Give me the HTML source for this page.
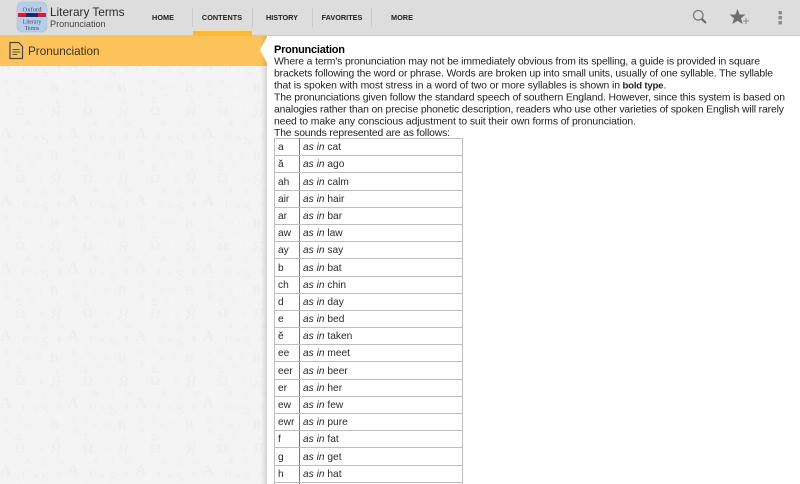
<!DOCTYPE html>
<html><head><meta charset="utf-8"><style>
html,body{margin:0;padding:0;width:800px;height:484px;overflow:hidden;background:#fff;font-family:"Liberation Sans",sans-serif;color:#111}
#root{position:absolute;left:0;top:0;width:800px;height:484px;overflow:hidden;background:#fff}
#root>div,#root>svg{position:absolute}
#hdr{left:0;top:0;width:800px;height:35px;background:#dddddd;border-bottom:1px solid #c9c9c9}
.tab{position:absolute;top:13px;font-size:7.3px;font-weight:bold;color:#222;line-height:10px;text-align:center;width:60px}
.sep{position:absolute;top:8px;width:1px;height:19px;background:#cbcbcb}
#side{left:0;top:36px;width:267px;height:448px;background:#f4f4f4}
#bar{left:0;top:36px;width:267px;height:30px;background:#fdc35b}
table{position:absolute;left:274px;top:138px;border-collapse:collapse;width:189px;table-layout:fixed;font-size:10.2px;color:#2a2a2a}
td{border:1px solid #bdbdbd;padding:2.2px 0 0 3px;height:14px;line-height:14px;white-space:nowrap;overflow:hidden}
td:first-child{width:21px;border-right-color:#777}
</style></head><body><div id="root">
<div id="side"></div>
<svg width="267" height="448" style="left:0;top:36px">
<defs>
<pattern id="p" width="67.5" height="67.5" patternUnits="userSpaceOnUse" patternTransform="translate(0,30)">
<g font-family="Liberation Serif" fill="#eeeeee">
<text x="0" y="72" font-size="16" font-weight="bold">A</text><text x="0" y="4.5" font-size="16" font-weight="bold">A</text>
<text x="22" y="6.5" font-size="15">∂</text>
<text x="41" y="11" font-size="15">S</text>
<text x="57" y="6" font-size="8" font-weight="bold">ß</text>
<text x="33" y="6" font-size="7" font-weight="bold">ъ</text>
<text x="4" y="18" font-size="9">ŋ</text>
<text x="17" y="18" font-size="9">ü</text>
<text x="25" y="24" font-size="7">m</text>
<text x="36" y="24" font-size="8">O</text>
<text x="50" y="26" font-size="13" font-weight="bold">B</text>
<text x="5" y="31" font-size="9">K</text>
<text x="16" y="37" font-size="9" font-weight="bold">Σ</text>
<text x="29" y="33" font-size="8">G</text>
<text x="55" y="38" font-size="9">x</text>
<text x="15" y="49" font-size="13" font-weight="bold">Ω</text>
<text x="40" y="48" font-size="7">ћ</text>
<text x="50" y="51" font-size="17" font-style="italic">Я</text>
<text x="24" y="60" font-size="8" font-weight="bold">Æ</text>
<text x="41" y="61" font-size="8">Д</text>
<text x="57" y="61" font-size="9">W</text>
</g></pattern>
<linearGradient id="sh" x1="0" x2="1" y1="0" y2="0"><stop offset="0" stop-color="#000" stop-opacity="0"/><stop offset="1" stop-color="#000" stop-opacity=".13"/></linearGradient>
</defs>
<rect width="267" height="448" fill="url(#p)"/>
<rect x="261" width="6" height="448" fill="url(#sh)"/>
</svg>
<div id="bar"></div>
<svg width="267" height="30" style="left:0;top:36px">
<rect x="261" width="6" height="30" fill="url(#sh)"/>
<polygon points="267,1 260,14 267,27" fill="#fff"/>
<path d="M10 6.5H18.5L22.5 10.5V22.5H10Z" fill="none" stroke="#36486b" stroke-width="1.2"/>
<path d="M12.5 13.5H20M12.5 16H20M12.5 18.5H17.5" fill="none" stroke="#5a5440" stroke-width="1"/>
</svg>
<div id="hdr">
<svg width="50" height="36" style="position:absolute;left:16px;top:1px">
<rect x="1" y="1" width="30" height="30" rx="5" fill="#b7cde8" stroke="#a5bbd6" stroke-width=".5"/>
<rect x="2" y="12" width="28" height="4" fill="#e8162c"/><rect x="10" y="12" width="12" height="4" fill="#1f2a6b"/>
<g font-family="Liberation Serif" fill="#3a4a78" text-anchor="middle"><text x="16" y="10.5" font-size="6.6">Oxford</text><text x="16" y="22.5" font-size="5.8">Literary</text><text x="16" y="29" font-size="5.8">Terms</text></g>
</svg>
<div style="position:absolute;left:50px;top:5px;font-size:11.8px;line-height:15px;color:#2a2a2a">Literary Terms</div>
<div style="position:absolute;left:50px;top:18px;font-size:9.1px;line-height:12px;color:#444">Pronunciation</div>
<div class="tab" style="left:133px">HOME</div>
<div class="sep" style="left:192px"></div>
<div class="tab" style="left:192px">CONTENTS</div>
<div class="sep" style="left:252px"></div>
<div class="tab" style="left:252px">HISTORY</div>
<div class="sep" style="left:312px"></div>
<div class="tab" style="left:312px">FAVORITES</div>
<div class="sep" style="left:371px"></div>
<div class="tab" style="left:372px">MORE</div>
<div style="position:absolute;left:193px;top:31px;width:59px;height:5px;background:#fdb92f"></div>
<svg width="110" height="30" style="position:absolute;left:685px;top:3px" fill="#6f6f6f">
<circle cx="13.3" cy="12.3" r="4.8" fill="none" stroke="#777" stroke-width="1.2"/>
<path d="M16.8 16L21 20" stroke="#666" stroke-width="2" fill="none"/>
<path d="M52.5 6L54.6 11.5H60.5L56 15.2L57.7 21L52.5 17.7L47.3 21L49 15.2L44.5 11.5H50.4Z"/>
<path d="M58 18H64M61 15V21" stroke="#888" stroke-width="1" fill="none"/>
<rect x="93.5" y="8" width="3.4" height="3.4" fill="#8a8a8a"/><rect x="93.5" y="13" width="3.4" height="3.4" fill="#8a8a8a"/><rect x="93.5" y="18" width="3.4" height="3.4" fill="#8a8a8a"/>
</svg>
</div>
<div style="left:28px;top:45px;font-size:11.7px;line-height:14px;color:#3a3320">Pronunciation</div>
<svg width="533" height="110" style="left:267px;top:36px" font-family="Liberation Sans" font-size="10.4" fill="#1f1f1f">
<text x="7" y="17" font-size="11" font-weight="bold" fill="#000" textLength="71">Pronunciation</text>
<text x="7" y="28.5" textLength="486">Where a term's pronunciation may not be immediately obvious from its spelling, a guide is provided in square</text>
<text x="7" y="40.5" textLength="499">brackets following the word or phrase. Words are broken up into small units, usually of one syllable. The syllable</text>
<text x="7" y="52.5" textLength="346">that is spoken with most stress in a word of two or more syllables is shown in</text>
<text x="355.5" y="52.5" font-weight="bold" font-size="9.6" textLength="41">bold type</text>
<text x="396.5" y="52.5">.</text>
<text x="7" y="64.5" textLength="511">The pronunciations given follow the standard speech of southern England. However, since this system is based on</text>
<text x="7" y="76.5" textLength="510">analogies rather than on precise phonetic description, readers who use other varieties of spoken English will rarely</text>
<text x="7" y="88.5" textLength="362">need to make any conscious adjustment to suit their own forms of pronunciation.</text>
<text x="7" y="100" textLength="176">The sounds represented are as follows:</text>
</svg>
<table>
<tr><td>a</td><td><i>as in</i> cat</td></tr>
<tr><td>ă</td><td><i>as in</i> ago</td></tr>
<tr><td>ah</td><td><i>as in</i> calm</td></tr>
<tr><td>air</td><td><i>as in</i> hair</td></tr>
<tr><td>ar</td><td><i>as in</i> bar</td></tr>
<tr><td>aw</td><td><i>as in</i> law</td></tr>
<tr><td>ay</td><td><i>as in</i> say</td></tr>
<tr><td>b</td><td><i>as in</i> bat</td></tr>
<tr><td>ch</td><td><i>as in</i> chin</td></tr>
<tr><td>d</td><td><i>as in</i> day</td></tr>
<tr><td>e</td><td><i>as in</i> bed</td></tr>
<tr><td>ĕ</td><td><i>as in</i> taken</td></tr>
<tr><td>ee</td><td><i>as in</i> meet</td></tr>
<tr><td>eer</td><td><i>as in</i> beer</td></tr>
<tr><td>er</td><td><i>as in</i> her</td></tr>
<tr><td>ew</td><td><i>as in</i> few</td></tr>
<tr><td>ewr</td><td><i>as in</i> pure</td></tr>
<tr><td>f</td><td><i>as in</i> fat</td></tr>
<tr><td>g</td><td><i>as in</i> get</td></tr>
<tr><td>h</td><td><i>as in</i> hat</td></tr>
<tr><td>&nbsp;</td><td>&nbsp;</td></tr>
</table>
</div></body></html>
